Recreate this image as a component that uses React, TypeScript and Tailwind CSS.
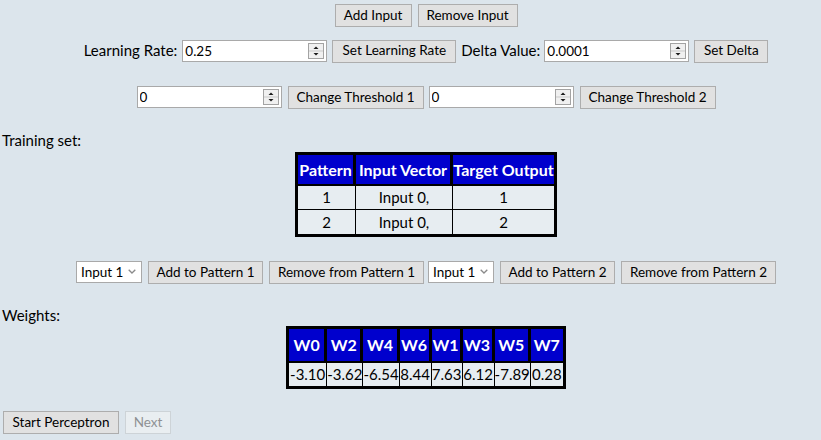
import React from 'react';

function Btn({ label, w, disabled = false }: { label: string; w: string; disabled?: boolean }) {
  return (
    <button
      disabled={disabled}
      className={`${w} h-[23px] shrink-0 border text-[13.5px] leading-none whitespace-nowrap ${
        disabled ? 'bg-[#e9eef1] border-[#cdd3d7] text-[#8e9194]' : 'bg-[#e1e1e1] border-[#adadad] text-black'
      }`}
    >
      {label}
    </button>
  );
}

function Spinner() {
  return (
    <svg width="16" height="16" viewBox="0 0 16 16" className="shrink-0 mr-[2px]">
      <rect x="0.5" y="0.5" width="15" height="15" fill="#f0f0f0" stroke="#a3a3a3" />
      <line x1="1" y1="8" x2="15" y2="8" stroke="#c9c9c9" />
      <path d="M8 3.5 L10.5 6 H5.5 Z" fill="#1a1a1a" />
      <path d="M5.5 10 H10.5 L8 12.5 Z" fill="#1a1a1a" />
    </svg>
  );
}

function NumInput({ value }: { value: string }) {
  return (
    <div className="w-[145px] h-[22px] shrink-0 flex items-center bg-white border border-[#a9a9a9]">
      <input
        defaultValue={value}
        className="flex-1 min-w-0 h-full bg-transparent outline-none pl-[2px] text-[13.5px] text-black"
      />
      <Spinner />
    </div>
  );
}

function InputSelect() {
  return (
    <div className="w-[66px] h-[22px] shrink-0 flex items-center bg-white border border-[#a9a9a9]">
      <select className="flex-1 min-w-0 h-full appearance-none bg-transparent outline-none pl-[4px] text-[13.5px] text-black">
        <option>Input 1</option>
        <option>Input 2</option>
      </select>
      <svg width="8" height="5" viewBox="0 0 8 5" className="shrink-0 mr-[5px]">
        <path d="M0.7 0.7 L4 4 L7.3 0.7" fill="none" stroke="#8a8a8a" strokeWidth="1.3" />
      </svg>
    </div>
  );
}

const weights = [
  { name: 'W0', value: '-3.10', w: 'w-[38px]' },
  { name: 'W2', value: '-3.62', w: 'w-[36px]' },
  { name: 'W4', value: '-6.54', w: 'w-[36px]' },
  { name: 'W6', value: '8.44', w: 'w-[32px]' },
  { name: 'W1', value: '7.63', w: 'w-[31px]' },
  { name: 'W3', value: '6.12', w: 'w-[32px]' },
  { name: 'W5', value: '-7.89', w: 'w-[35px]' },
  { name: 'W7', value: '0.28', w: 'w-[32px]' }
];

const patterns = [
  { id: '1', vector: 'Input 0,', target: '1' },
  { id: '2', vector: 'Input 0,', target: '2' }
];

export default function App() {
  const th = 'bg-[#0000cd] text-white font-bold p-0 whitespace-nowrap border-b-[2px] border-r-[3px] border-black last:border-r-0';

  return (
    <div className="min-h-screen w-full overflow-hidden bg-[#dce5ec] text-black font-['Lato','Liberation_Sans',sans-serif]">
      {/* Input buttons */}
      <div className="pt-[4px] pl-[31px] flex justify-center gap-[6px]">
        <Btn label="Add Input" w="w-[77px]" />
        <Btn label="Remove Input" w="w-[100px]" />
      </div>

      {/* Learning rate / delta */}
      <div className="mt-[12px] pl-[31px] flex justify-center items-center h-[23px] text-[15px]">
        <span className="mr-[5px]">Learning Rate:</span>
        <NumInput value="0.25" />
        <div className="ml-[5px]">
          <Btn label="Set Learning Rate" w="w-[124px]" />
        </div>
        <span className="ml-[5px] mr-[4px]">Delta Value:</span>
        <NumInput value="0.0001" />
        <div className="ml-[5px]">
          <Btn label="Set Delta" w="w-[74px]" />
        </div>
      </div>

      {/* Thresholds */}
      <div className="mt-[23px] pl-[31px] flex justify-center items-center h-[23px]">
        <NumInput value="0" />
        <div className="ml-[6px] mr-[5px]">
          <Btn label="Change Threshold 1" w="w-[136px]" />
        </div>
        <NumInput value="0" />
        <div className="ml-[6px]">
          <Btn label="Change Threshold 2" w="w-[136px]" />
        </div>
      </div>

      {/* Training set */}
      <p className="mt-[23px] pl-[2px] text-[15px] leading-[18px]">Training set:</p>
      <div className="mt-[3px] pl-[31px] flex justify-center">
        <table className="border-separate border-spacing-0 border-[3px] border-black text-center">
          <thead>
            <tr>
              <th className={`${th} w-[58px] h-[31px] text-[16px]`}>Pattern</th>
              <th className={`${th} w-[97px] h-[31px] text-[16px]`}>Input Vector</th>
              <th className={`${th} w-[101px] h-[31px] text-[16px]`}>Target Output</th>
            </tr>
          </thead>
          <tbody>
            {patterns.map((p, i) => (
              <tr key={p.id} className="text-[15px]">
                {[p.id, p.vector, p.target].map((c, j) => (
                  <td
                    key={j}
                    className={`bg-[#e7edf1] p-0 h-[24px] border-black border-r last:border-r-0 ${
                      i === 0 ? 'border-b' : ''
                    }`}
                  >
                    {c}
                  </td>
                ))}
              </tr>
            ))}
          </tbody>
        </table>
      </div>

      {/* Pattern editing */}
      <div className="mt-[23px] pl-[31px] flex justify-center items-center h-[23px]">
        <InputSelect />
        <div className="ml-[6px]">
          <Btn label="Add to Pattern 1" w="w-[115px]" />
        </div>
        <div className="ml-[6px] mr-[4px]">
          <Btn label="Remove from Pattern 1" w="w-[155px]" />
        </div>
        <InputSelect />
        <div className="ml-[6px]">
          <Btn label="Add to Pattern 2" w="w-[115px]" />
        </div>
        <div className="ml-[6px]">
          <Btn label="Remove from Pattern 2" w="w-[155px]" />
        </div>
      </div>

      {/* Weights */}
      <p className="mt-[23px] pl-[2px] text-[15px] leading-[18px]">Weights:</p>
      <div className="mt-[2px] pl-[31px] flex justify-center">
        <table className="border-separate border-spacing-0 border-[3px] border-black text-center">
          <thead>
            <tr>
              {weights.map((w) => (
                <th key={w.name} className={`${th} ${w.w} h-[34px] text-[16px]`}>
                  {w.name}
                </th>
              ))}
            </tr>
          </thead>
          <tbody>
            <tr className="text-[15px]">
              {weights.map((w) => (
                <td
                  key={w.name}
                  className="bg-[#e7edf1] p-0 h-[23px] whitespace-nowrap border-r border-black last:border-r-0"
                >
                  {w.value}
                </td>
              ))}
            </tr>
          </tbody>
        </table>
      </div>

      {/* Run controls */}
      <div className="mt-[22px] pl-[3px] flex gap-[6px]">
        <Btn label="Start Perceptron" w="w-[116px]" />
        <Btn label="Next" w="w-[46px]" disabled />
      </div>
    </div>
  );
}
